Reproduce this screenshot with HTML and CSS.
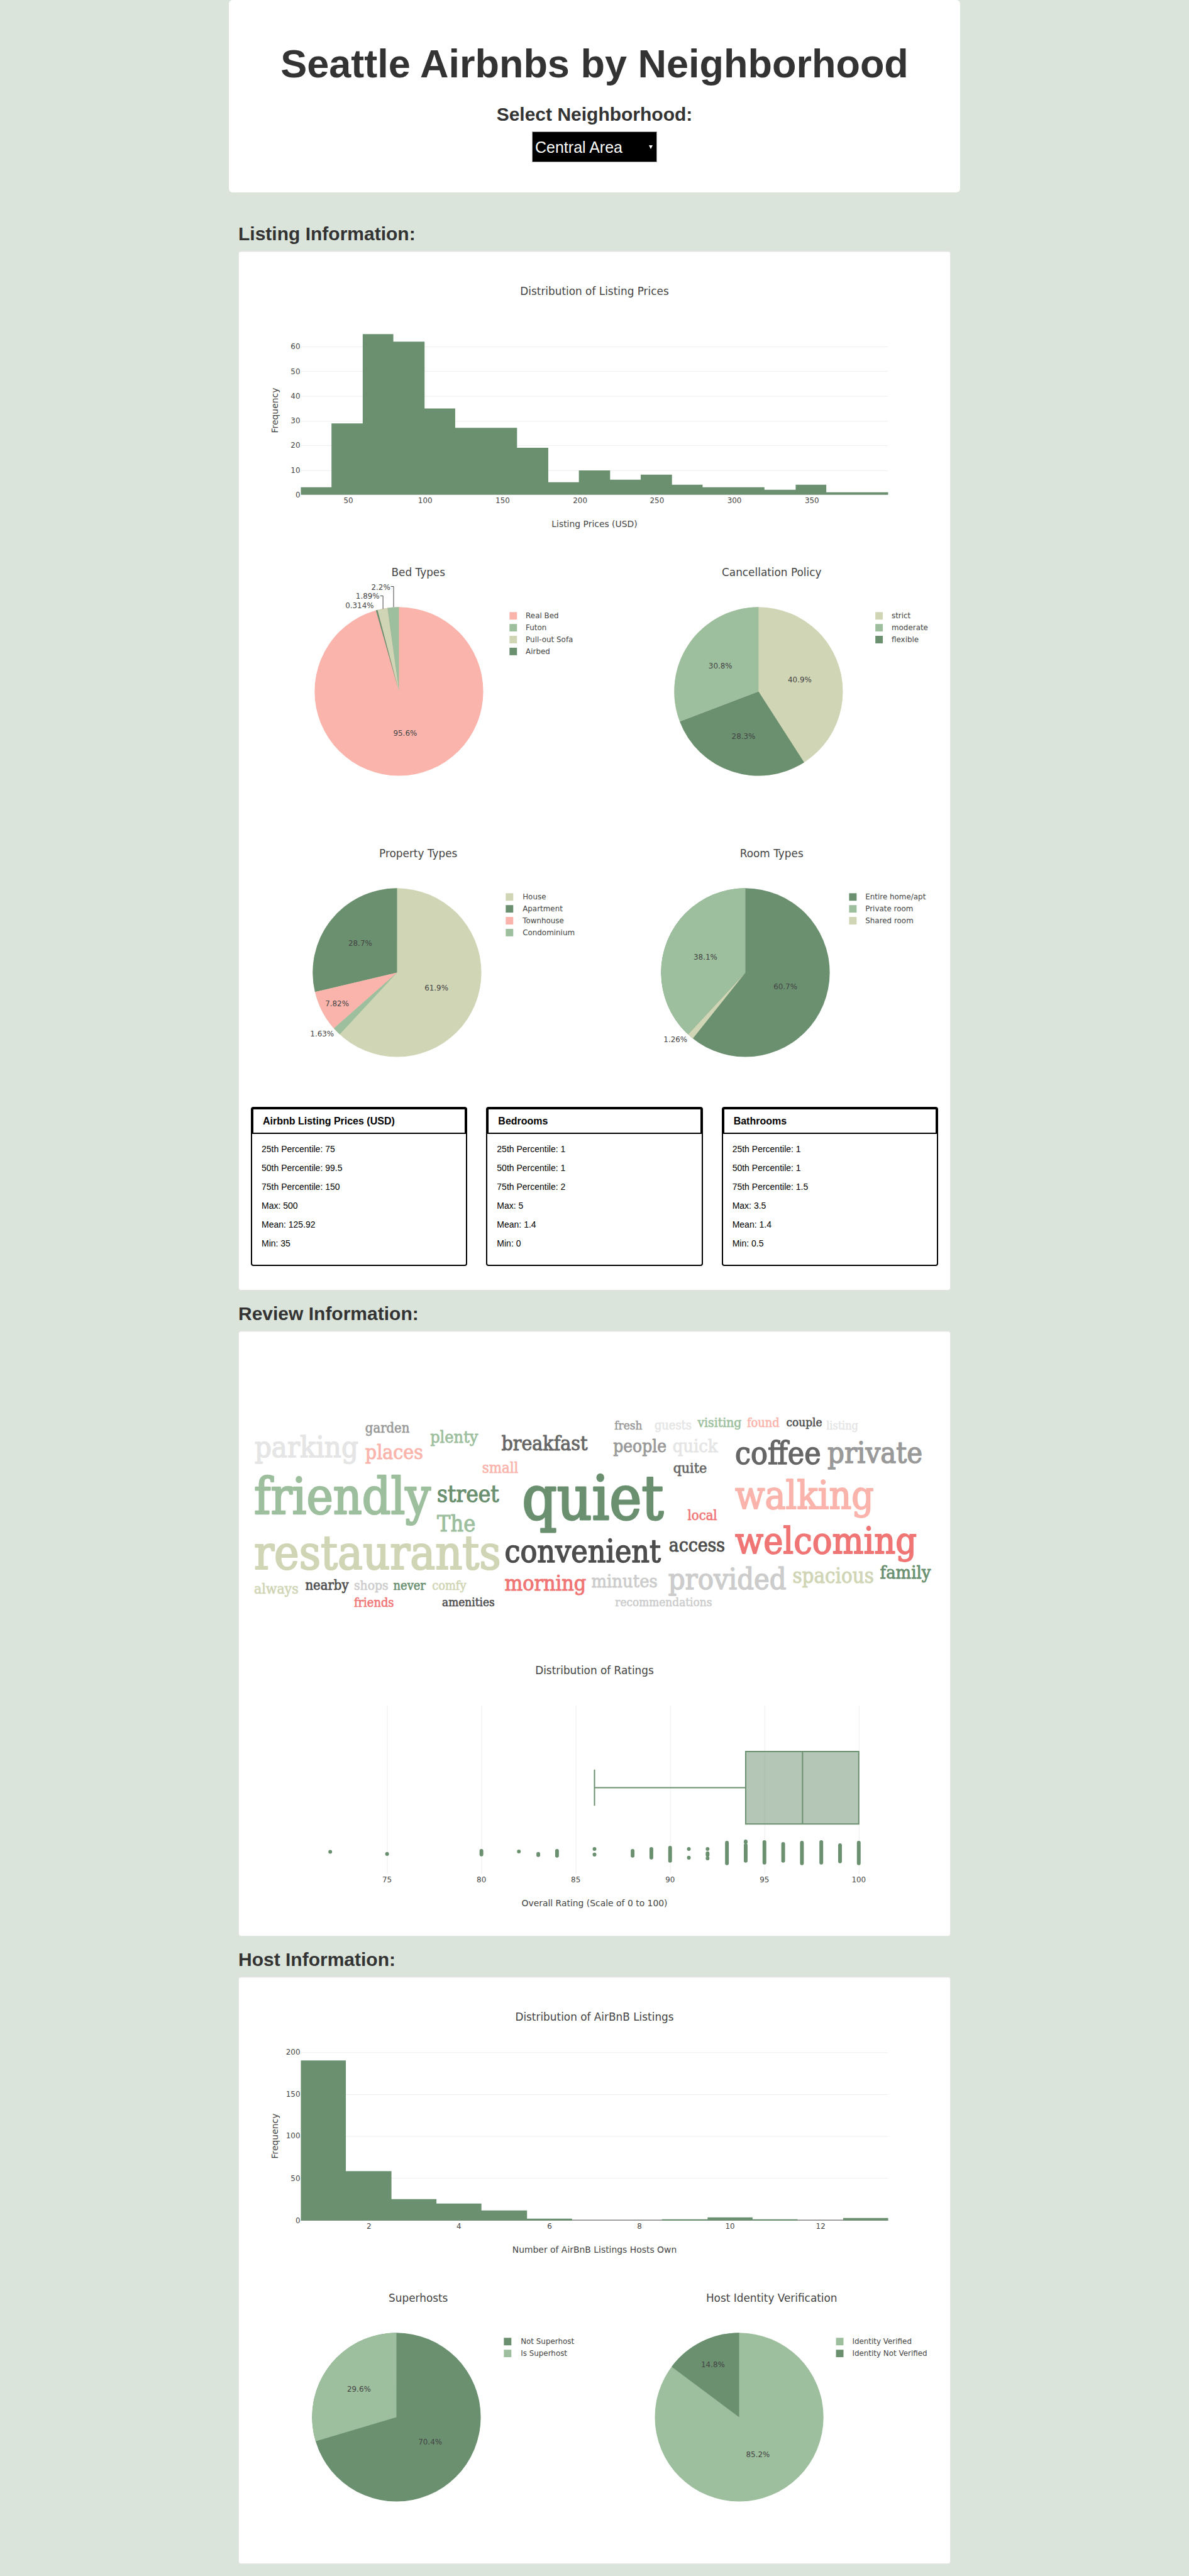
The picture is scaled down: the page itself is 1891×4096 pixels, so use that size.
FILE: index.html
```html
<!DOCTYPE html>
<html lang="en">
<head>
<meta charset="utf-8">
<meta name="viewport" content="width=device-width, initial-scale=1">
<title>Seattle Airbnbs by Neighborhood</title>
<link rel="stylesheet" href="styles.css">
</head>
<body>
<div class="container">
  <header class="hero">
    <h1 class="hero-title">Seattle Airbnbs by Neighborhood</h1>
    <label class="hero-label" for="neighborhood">Select Neighborhood:</label>
    <div class="select-wrap">
      <select class="select" id="neighborhood">
        <option>Ballard</option>
        <option>Capitol Hill</option>
        <option selected>Central Area</option>
        <option>Downtown</option>
        <option>Queen Anne</option>
      </select>
    </div>
  </header>

  <main class="content">
    <h2 class="section-title">Listing Information:</h2>
    <section class="panel">
      <svg class="chart" viewBox="0 0 1100 450" role="img" aria-label="Distribution of Listing Prices">
        <text class="title" x="550" y="50">Distribution of Listing Prices</text>
        <path class="grid" d="M80 133.5H1020M80 172.5H1020M80 212.5H1020M80 252.5H1020M80 291.5H1020M80 331.5H1020"/>
        <path class="c-dark" d="M80 370V358H129V256H179V113H228V125H278V232H327V263H426V295H476V350H525V331H575V346H624V338H674V354H723V358H822V362H872V354H921V366H1020V370Z"/>
        <g class="end">
          <text x="79" y="137">60</text><text x="79" y="177">50</text><text x="79" y="216">40</text>
          <text x="79" y="256">30</text><text x="79" y="295">20</text><text x="79" y="335">10</text><text x="79" y="374">0</text>
        </g>
        <g class="mid">
          <text x="156" y="383">50</text><text x="279" y="383">100</text><text x="403" y="383">150</text>
          <text x="527" y="383">200</text><text x="650" y="383">250</text><text x="774" y="383">300</text><text x="898" y="383">350</text>
        </g>
        <text class="axis" x="550" y="422">Listing Prices (USD)</text>
        <text class="axis" transform="translate(43 235) rotate(-90)">Frequency</text>
      </svg>

      <div class="pair">
        <svg class="chart" viewBox="0 0 535 450" role="img" aria-label="Bed Types">
          <text class="title" x="268" y="50">Bed Types</text>
          <circle class="c-pink" cx="237" cy="235" r="135"/>
          <path class="c-mid" d="M237 235L218.4 101.3A135 135 0 0 1 237 100Z"/>
          <path class="c-sand" d="M237 235L202.7 104.4A135 135 0 0 1 218.4 101.3Z"/>
          <path class="c-dark" d="M237 235L200.1 105.1A135 135 0 0 1 202.7 104.4Z"/>
          <path class="leader" d="M224 67H228.5V100M207 82H211.5V103"/>
          <g class="mid">
            <text x="208" y="72">2.2%</text><text x="187" y="87">1.89%</text><text x="174" y="102">0.314%</text><text x="247" y="306">95.6%</text>
          </g>
          <rect class="c-pink" x="414" y="108" width="12" height="12"/><text x="440" y="118">Real Bed</text>
          <rect class="c-mid" x="414" y="127" width="12" height="12"/><text x="440" y="137">Futon</text>
          <rect class="c-sand" x="414" y="146" width="12" height="12"/><text x="440" y="156">Pull-out Sofa</text>
          <rect class="c-dark" x="414" y="165" width="12" height="12"/><text x="440" y="175">Airbed</text>
        </svg>
        <svg class="chart" viewBox="0 0 535 450" role="img" aria-label="Cancellation Policy">
          <text class="title" x="268" y="50">Cancellation Policy</text>
          <circle class="c-sand" cx="247" cy="235" r="135"/>
          <path class="c-dark" d="M247 235L320 348.5A135 135 0 0 1 120.9 283.1Z"/>
          <path class="c-mid" d="M247 235L120.9 283.1A135 135 0 0 1 247 100Z"/>
          <g class="mid">
            <text x="186" y="198">30.8%</text><text x="313" y="220">40.9%</text><text x="223" y="311">28.3%</text>
          </g>
          <rect class="c-sand" x="434" y="108" width="12" height="12"/><text x="460" y="118">strict</text>
          <rect class="c-mid" x="434" y="127" width="12" height="12"/><text x="460" y="137">moderate</text>
          <rect class="c-dark" x="434" y="146" width="12" height="12"/><text x="460" y="156">flexible</text>
        </svg>
        <svg class="chart" viewBox="0 0 535 450" role="img" aria-label="Property Types">
          <text class="title" x="268" y="50">Property Types</text>
          <circle class="c-sand" cx="234" cy="235" r="135"/>
          <path class="c-dark" d="M234 235L102.6 266.1A135 135 0 0 1 234 100Z"/>
          <path class="c-pink" d="M234 235L132.8 324.4A135 135 0 0 1 102.6 266.1Z"/>
          <path class="c-mid" d="M234 235L142.2 334A135 135 0 0 1 132.8 324.4Z"/>
          <g class="mid">
            <text x="175" y="192">28.7%</text><text x="297" y="264">61.9%</text><text x="138" y="289">7.82%</text><text x="114" y="337">1.63%</text>
          </g>
          <rect class="c-sand" x="408" y="108" width="12" height="12"/><text x="435" y="118">House</text>
          <rect class="c-dark" x="408" y="127" width="12" height="12"/><text x="435" y="137">Apartment</text>
          <rect class="c-pink" x="408" y="146" width="12" height="12"/><text x="435" y="156">Townhouse</text>
          <rect class="c-mid" x="408" y="165" width="12" height="12"/><text x="435" y="175">Condominium</text>
        </svg>
        <svg class="chart" viewBox="0 0 535 450" role="img" aria-label="Room Types">
          <text class="title" x="268" y="50">Room Types</text>
          <circle class="c-dark" cx="226" cy="235" r="135"/>
          <path class="c-mid" d="M226 235L134.2 334A135 135 0 0 1 226 100Z"/>
          <path class="c-sand" d="M226 235L141.9 340.6A135 135 0 0 1 134.2 334Z"/>
          <g class="mid">
            <text x="162" y="214">38.1%</text><text x="290" y="262">60.7%</text><text x="114" y="346">1.26%</text>
          </g>
          <rect class="c-dark" x="392" y="108" width="12" height="12"/><text x="418" y="118">Entire home/apt</text>
          <rect class="c-mid" x="392" y="127" width="12" height="12"/><text x="418" y="137">Private room</text>
          <rect class="c-sand" x="392" y="146" width="12" height="12"/><text x="418" y="156">Shared room</text>
        </svg>
      </div>

      <div class="cards">
        <article class="card">
          <h3 class="card-title">Airbnb Listing Prices (USD)</h3>
          <ul class="card-list">
            <li>25th Percentile: 75</li><li>50th Percentile: 99.5</li><li>75th Percentile: 150</li>
            <li>Max: 500</li><li>Mean: 125.92</li><li>Min: 35</li>
          </ul>
        </article>
        <article class="card">
          <h3 class="card-title">Bedrooms</h3>
          <ul class="card-list">
            <li>25th Percentile: 1</li><li>50th Percentile: 1</li><li>75th Percentile: 2</li>
            <li>Max: 5</li><li>Mean: 1.4</li><li>Min: 0</li>
          </ul>
        </article>
        <article class="card">
          <h3 class="card-title">Bathrooms</h3>
          <ul class="card-list">
            <li>25th Percentile: 1</li><li>50th Percentile: 1</li><li>75th Percentile: 1.5</li>
            <li>Max: 3.5</li><li>Mean: 1.4</li><li>Min: 0.5</li>
          </ul>
        </article>
      </div>
    </section>

    <h2 class="section-title">Review Information:</h2>
    <section class="panel">
      <svg class="chart cloud" viewBox="0 0 1100 479" role="img" aria-label="Most used words in reviews">
        <text class="w-light" x="6" y="182" font-size="47">parking</text>
        <text class="w-gray" x="183" y="143" font-size="22">garden</text>
        <text class="c-pink" x="183" y="185" font-size="32">places</text>
        <text class="c-mid" x="287" y="159" font-size="27">plenty</text>
        <text class="w-dim" x="401" y="171" font-size="32">breakfast</text>
        <text class="c-pink" x="370" y="207" font-size="24">small</text>
        <text class="c-mid" x="5" y="273" font-size="80">friendly</text>
        <text class="c-dark" x="298" y="254" font-size="37">street</text>
        <text class="c-mid" x="298" y="301" font-size="36">The</text>
        <text class="c-dark" x="434" y="282" font-size="97">quiet</text>
        <text class="c-sand" x="5" y="361" font-size="75">restaurants</text>
        <text class="w-ink" x="406" y="350" font-size="50">convenient</text>
        <text class="c-sand" x="5" y="401" font-size="23">always</text>
        <text class="w-ink" x="87" y="395" font-size="22">nearby</text>
        <text class="w-pale" x="165" y="395" font-size="21">shops</text>
        <text class="c-dark" x="228" y="395" font-size="20">never</text>
        <text class="c-sand" x="290" y="395" font-size="20">comfy</text>
        <text class="w-red" x="165" y="422" font-size="20">friends</text>
        <text class="w-ink" x="306" y="421" font-size="19">amenities</text>
        <text class="w-red" x="406" y="396" font-size="34">morning</text>
        <text class="w-pale" x="545" y="390" font-size="29">minutes</text>
        <text class="w-gray" x="582" y="138" font-size="19">fresh</text>
        <text class="w-light" x="646" y="138" font-size="20">guests</text>
        <text class="c-mid" x="715" y="134" font-size="21">visiting</text>
        <text class="c-pink" x="794" y="134" font-size="20">found</text>
        <text class="w-ink" x="857" y="133" font-size="19">couple</text>
        <text class="w-light" x="921" y="138" font-size="18">listing</text>
        <text class="w-gray" x="580" y="174" font-size="28">people</text>
        <text class="w-light" x="675" y="174" font-size="29">quick</text>
        <text class="w-dim" x="775" y="193" font-size="50">coffee</text>
        <text class="w-gray" x="923" y="191" font-size="47">private</text>
        <text class="w-dim" x="676" y="207" font-size="23">quite</text>
        <text class="c-pink" x="775" y="265" font-size="62">walking</text>
        <text class="w-red" x="699" y="283" font-size="22">local</text>
        <text class="w-ink" x="669" y="333" font-size="30">access</text>
        <text class="w-red" x="775" y="336" font-size="59">welcoming</text>
        <text class="w-pale" x="668" y="394" font-size="47">provided</text>
        <text class="c-sand" x="867" y="383" font-size="33">spacious</text>
        <text class="c-dark" x="1007" y="376" font-size="29">family</text>
        <text class="w-pale" x="583" y="421" font-size="19">recommendations</text>
      </svg>
      <svg class="chart" viewBox="0 0 1100 450" role="img" aria-label="Distribution of Ratings">
        <text class="title" x="550" y="50">Distribution of Ratings</text>
        <path class="grid" d="M218.5 100V370M369.5 100V370M520.5 100V370M671.5 100V370M822.5 100V370M973.5 100V370"/>
        <path class="box" d="M792 174H973V290H792ZM883 174V290M792 232H550M550 203V261"/>
        <path class="dots" d="M127 334.5v.1M218 338v.1M369 333V339M429 334v.1M460 338V340M490 333V341M550 330v.1M550 339v.1M611 333V341M641 330V344M671 328V349M701 330v.1M701 344v.1M731 330v.1M731 337V340M731 345v.1M762 320V353M792 318V319M792 324V349M822 319V352M852 322V349M882 320V353M913 319V352M943 324V350M973 320V353"/>
        <g class="mid">
          <text x="218" y="383">75</text><text x="369" y="383">80</text><text x="520" y="383">85</text>
          <text x="671" y="383">90</text><text x="822" y="383">95</text><text x="973" y="383">100</text>
        </g>
        <text class="axis" x="550" y="422">Overall Rating (Scale of 0 to 100)</text>
      </svg>
    </section>

    <h2 class="section-title">Host Information:</h2>
    <section class="panel">
      <svg class="chart" viewBox="0 0 1100 450" role="img" aria-label="Distribution of AirBnB Listings">
        <text class="title" x="550" y="50">Distribution of AirBnB Listings</text>
        <path class="grid" d="M80 101.5H1020M80 168.5H1020M80 235.5H1020M80 302.5H1020"/>
        <path class="zero" d="M80 369.5H1020"/>
        <path class="c-dark" d="M80 370V114H152V291H225V336H297V343H369V354H442V367H514V370ZM658 370V368H731V365H803V368H875V370ZM948 370V366H1020V370Z"/>
        <g class="end">
          <text x="79" y="105">200</text><text x="79" y="172">150</text><text x="79" y="239">100</text>
          <text x="79" y="307">50</text><text x="79" y="374">0</text>
        </g>
        <g class="mid">
          <text x="189" y="383">2</text><text x="333" y="383">4</text><text x="478" y="383">6</text>
          <text x="622" y="383">8</text><text x="767" y="383">10</text><text x="912" y="383">12</text>
        </g>
        <text class="axis" x="550" y="422">Number of AirBnB Listings Hosts Own</text>
        <text class="axis" transform="translate(43 235) rotate(-90)">Frequency</text>
      </svg>
      <div class="pair">
        <svg class="chart" viewBox="0 0 535 450" role="img" aria-label="Superhosts">
          <text class="title" x="268" y="50">Superhosts</text>
          <circle class="c-dark" cx="233" cy="235" r="135"/>
          <path class="c-mid" d="M233 235L103.6 273.5A135 135 0 0 1 233 100Z"/>
          <g class="mid"><text x="173" y="194">29.6%</text><text x="287" y="279">70.4%</text></g>
          <rect class="c-dark" x="405" y="108" width="12" height="12"/><text x="432" y="118">Not Superhost</text>
          <rect class="c-mid" x="405" y="127" width="12" height="12"/><text x="432" y="137">Is Superhost</text>
        </svg>
        <svg class="chart" viewBox="0 0 535 450" role="img" aria-label="Host Identity Verification">
          <text class="title" x="268" y="50">Host Identity Verification</text>
          <circle class="c-mid" cx="216" cy="235" r="135"/>
          <path class="c-dark" d="M216 235L107.8 154.3A135 135 0 0 1 216 100Z"/>
          <g class="mid"><text x="174" y="155">14.8%</text><text x="246" y="299">85.2%</text></g>
          <rect class="c-mid" x="371" y="108" width="12" height="12"/><text x="397" y="118">Identity Verified</text>
          <rect class="c-dark" x="371" y="127" width="12" height="12"/><text x="397" y="137">Identity Not Verified</text>
        </svg>
      </div>
    </section>
  </main>
</div>
</body>
</html>
```
FILE: styles.css
```css
* { box-sizing: border-box; }

body {
  margin: 0;
  background: #dae4da;
  color: #333;
  font-family: "Liberation Sans", Arial, sans-serif;
  font-size: 14px;
  line-height: 20px;
}

.container {
  max-width: 1163px;
  margin: 0 auto;
}

.hero {
  display: flex;
  flex-direction: column;
  align-items: center;
  padding: 70px 60px 48px;
  background: #fff;
  border-radius: 6px;
  text-align: center;
}

.hero-title {
  margin: 0 0 32px;
  font-size: 63px;
  line-height: 63px;
}

.hero-label {
  margin-bottom: 10px;
  font-size: 30px;
  font-weight: 700;
  line-height: 34px;
}

.select-wrap {
  position: relative;
}

.select-wrap::after {
  content: "";
  position: absolute;
  top: 22px;
  right: 7px;
  border: 3px solid transparent;
  border-top: 6px solid #fff;
  border-bottom: 0;
  pointer-events: none;
}

.select {
  display: block;
  width: 199px;
  height: 49px;
  padding: 0 4px;
  appearance: none;
  border: 1px solid #a9a9a9;
  border-radius: 0;
  background: #000;
  color: #fff;
  font-family: inherit;
  font-size: 25px;
}

.content {
  padding: 29px 15px 0;
}

.section-title {
  margin: 20px 0 10px;
  font-size: 30px;
  line-height: 34px;
}

.panel {
  margin-bottom: 20px;
  padding: 19px;
  border: 1px solid #e3e3e3;
  border-radius: 4px;
  background: #fff;
  box-shadow: inset 0 1px 1px rgba(0, 0, 0, .05);
}

.panel:last-child {
  margin-bottom: 0;
}

.chart {
  display: block;
  width: 100%;
  height: auto;
  fill: #444;
  font-family: Verdana, "DejaVu Sans", sans-serif;
  font-size: 12px;
}

.title,
.axis,
.mid { text-anchor: middle; }
.end { text-anchor: end; }
.title { font-size: 17px; }
.axis { font-size: 14px; }

.grid { fill: none; stroke: #eee; }
.zero { fill: none; stroke: #444; }
.leader { fill: none; stroke: #444; }
.box { fill: rgba(106, 144, 112, .5); stroke: #6a9070; stroke-width: 2; }
.dots { fill: none; stroke: #6a9070; stroke-width: 6; stroke-linecap: round; }

.c-dark { color: #6a9070; fill: currentColor; }
.c-mid { color: #9dbf9e; fill: currentColor; }
.c-sand { color: #d0d5b5; fill: currentColor; }
.c-pink { color: #fab4ac; fill: currentColor; }

/* Word cloud: a thin outline in the word's own colour gives a medium weight */
.cloud { font-family: "DejaVu Serif Condensed", "DejaVu Serif", serif; }
.cloud text { fill: currentColor; stroke: currentColor; stroke-width: .03em; stroke-linejoin: round; }
.w-ink { color: #4d4d4d; }
.w-dim { color: #666; }
.w-gray { color: #999; }
.w-pale { color: #ccc; }
.w-light { color: #e5e5e5; }
.w-red { color: #f07575; }

.pair {
  display: grid;
  grid-template-columns: 1fr 1fr;
  column-gap: 30px;
}

.cards {
  display: grid;
  grid-template-columns: repeat(3, 1fr);
  gap: 30px;
  margin-bottom: 19px;
}

.card {
  border: 2px solid #000;
  border-radius: 4px;
  color: #000;
}

.card-title {
  margin: 0;
  padding: 10px 15px;
  border: 2px solid #000;
  font-size: 16px;
  line-height: 17px;
}

.card-list {
  margin: 0;
  padding: 14px 15px;
  list-style: none;
}

.card-list li {
  margin-bottom: 10px;
}
```
